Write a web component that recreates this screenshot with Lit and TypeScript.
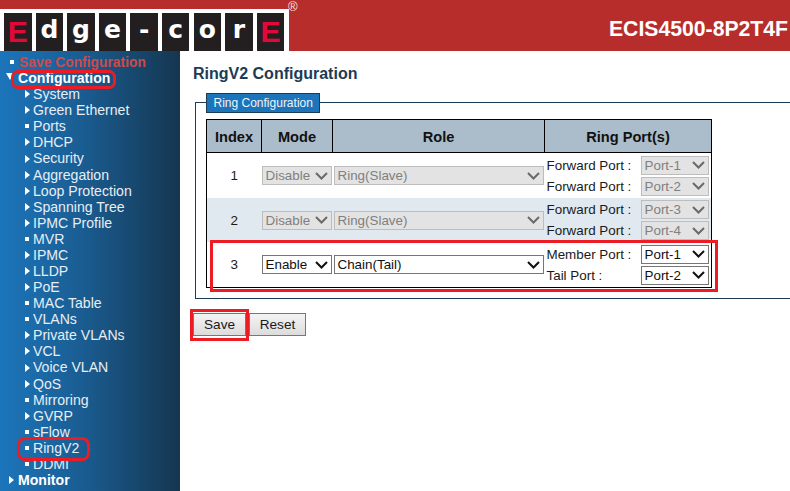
import { LitElement, html, css, svg } from "lit";
import { customElement } from "lit/decorators.js";

type Nav = { t: string; k: "bullet" | "arrow"; };
const NAV: Nav[] = [
  ["System", "arrow"], ["Green Ethernet", "arrow"], ["Ports", "bullet"], ["DHCP", "arrow"], ["Security", "arrow"],
  ["Aggregation", "arrow"], ["Loop Protection", "arrow"], ["Spanning Tree", "arrow"], ["IPMC Profile", "arrow"],
  ["MVR", "bullet"], ["IPMC", "arrow"], ["LLDP", "arrow"], ["PoE", "arrow"], ["MAC Table", "bullet"], ["VLANs", "bullet"],
  ["Private VLANs", "arrow"], ["VCL", "arrow"], ["Voice VLAN", "arrow"], ["QoS", "arrow"], ["Mirroring", "bullet"],
  ["GVRP", "arrow"], ["sFlow", "bullet"], ["RingV2", "bullet"], ["DDMI", "bullet"],
].map(([t, k]) => ({ t, k })) as Nav[];

const LOGO = ["E", "d", "g", "e", "-", "c", "o", "r", "E"];

const chevron = svg`<polyline points="1,1 6.5,6.5 12,1" fill="none" stroke="currentColor" stroke-width="2"/>`;

@customElement("app-root")
export class AppRoot extends LitElement {
  static styles = css`
    :host { display: block; width: 790px; height: 491px; overflow: hidden; position: relative; background: #fff;
      font-family: "Liberation Sans", Arial, sans-serif; }
    .header { height: 51px; background: #b72d2c; display: flex; justify-content: space-between; position: relative; }
    .logo { width: 289px; margin-top: 9px; background: #fff; box-sizing: border-box; padding: 4px 4px 0 4px; display: flex; gap: 4.1px; }
    .tile { width: 27.5px; height: 38px; background: #231f20; color: #fff; font: bold 25px/33px "DejaVu Sans", sans-serif;
      text-align: center; box-sizing: border-box; overflow: hidden; }
    .tile.red { color: #e4083a; font: bold 30px/37px "Liberation Sans", sans-serif; }
    .reg { position: absolute; left: 288px; top: 0; color: #f3e3e3; font-size: 13px; line-height: 13px; }
    .model { color: #fff; font-weight: bold; font-size: 21.2px; line-height: 22px; padding: 18px 2px 0 0; }
    .body { display: flex; height: 440px; }
    .side { width: 180px; flex: none; box-sizing: border-box; padding-top: 3px; overflow: hidden;
      background: linear-gradient(to right, #1c75bb, #1a5d92 45%, #153650); color: #e8eef4; font-size: 14.1px; }
    .row { height: 16.08px; line-height: 16.08px; display: flex; align-items: center; white-space: nowrap; padding-left: 25px; }
    .row .ic { width: 8px; flex: none; display: flex; align-items: center; }
    .bullet { width: 4px; height: 4px; background: #fff; display: block; }
    .arrow { width: 0; height: 0; border-left: 5px solid #fff; border-top: 4.5px solid transparent; border-bottom: 4.5px solid transparent; display: block; }
    .row.top { padding-left: 0; font-weight: bold; color: #fff; font-size: 14.1px; }
    .row.save { padding-left: 10px; color: #cd4a4c; font-size: 13.85px; }
    .save .ic { width: 9px; }
    .conf .ic { width: 18px; padding-left: 6px; box-sizing: border-box; }
    .down { width: 0; height: 0; border-top: 7px solid #fff; border-left: 4px solid transparent; border-right: 4px solid transparent; margin-top: -3px; }
    .row.mon { padding-left: 9px; }
    .mon .ic { width: 9px; }
    .main { flex: 1; min-width: 0; padding: 14px 0 0 12px; color: #1a3a52; }
    h1 { margin: 0 0 0 1px; font-size: 16px; line-height: 18px; font-weight: bold; color: #1c3b54; }
    .field { margin: 19px -60px 0 3px; border: 1px solid #1c3b54; height: 179px; padding: 16px 0 0 10px; box-sizing: content-box; position: relative; }
    .legend { position: absolute; left: 10px; top: -10px; height: 18px; line-height: 18px; padding: 0 6.5px; background: #1c75bb; border: 1px solid #1c3b54;
      color: #eef4f9; font-size: 12px; white-space: nowrap; }
    table { border-collapse: collapse; width: 505px; table-layout: fixed; border: 1px solid #000; font-size: 13.4px; color: #1a1a1a; }
    th { background: #abbcca; border: 1px solid #000; box-sizing: border-box; height: 33px; padding: 1px 0 0; font-size: 14.6px; font-weight: bold; color: #111; }
    td { padding: 0; height: 45px; }
    tr.alt td { height: 44px; background: #e0e8f0; }
    .idx { text-align: center; }
    .sel { box-sizing: border-box; height: 19px; border: 1px solid #767676; background: #fff; color: #111; font-size: 13.4px;
      line-height: 17px; padding-left: 3px; display: flex; justify-content: space-between; align-items: center; overflow: hidden; }
    .sel svg { width: 13px; height: 8px; flex: none; margin-right: 3px; color: #111; }
    .sel.off { background: #e3e3e3; border-color: #bdbdbd; color: #808080; }
    .sel.off svg { color: #6a6a6a; }
    .role { margin-left: 1px; }
    .ports { display: grid; grid-template-columns: 94px 68px; row-gap: 2px; padding: 0 0 0 2px; align-items: center; }
    .btns { display: flex; gap: 3px; margin: 14px 0 0 1px; }
    button { all: unset; box-sizing: border-box; height: 23px; border: 1px solid #777; text-align: center; font-size: 13.6px; color: #1a1a1a;
      background: linear-gradient(#f4f4f4, #dcdcdc); font-family: inherit; }
    .anno { position: absolute; border: 3px solid #ed1c24; box-sizing: border-box; pointer-events: none; }
    .a1 { left: 11px; top: 70px; width: 105px; height: 19px; border-radius: 7px; }
    .a2 { left: 17px; top: 437px; width: 73px; height: 24px; border-radius: 8px; }
    .a3 { left: 210px; top: 240px; width: 508px; height: 52px; }
    .a4 { left: 190px; top: 309px; width: 59px; height: 32px; }
  `;

  private sel(text: string, w: number, off: boolean, cls = "") {
    return html`<div class="sel ${off ? "off" : ""} ${cls}" style="width:${w}px">
      <span>${text}</span><svg viewBox="0 0 13 8">${chevron}</svg></div>`;
  }

  private rowT(i: number, mode: string, role: string, l1: string, p1: string, l2: string, p2: string, off: boolean, cls: string) {
    return html`<tr class=${cls}>
      <td class="idx">${i}</td>
      <td>${this.sel(mode, 70, off)}</td>
      <td>${this.sel(role, 210, off, "role")}</td>
      <td><div class="ports">
        <span>${l1}</span>${this.sel(p1, 68, off)}
        <span>${l2}</span>${this.sel(p2, 68, off)}
      </div></td>
    </tr>`;
  }

  render() {
    return html`
      <div class="header">
        <div class="logo">${LOGO.map((c, i) => html`<div class="tile ${i === 0 || i === 8 ? "red" : ""}">${c}</div>`)}</div>
        <span class="reg">®</span>
        <div class="model">ECIS4500-8P2T4F</div>
      </div>
      <div class="body">
        <nav class="side">
          <div class="row top save"><span class="ic"><i class="bullet"></i></span>Save Configuration</div>
          <div class="row top conf"><span class="ic"><i class="down"></i></span>Configuration</div>
          ${NAV.map((n) => html`<div class="row"><span class="ic"><i class=${n.k}></i></span>${n.t}</div>`)}
          <div class="row top mon"><span class="ic"><i class="arrow"></i></span>Monitor</div>
        </nav>
        <main class="main">
          <h1>RingV2 Configuration</h1>
          <div class="field">
            <div class="legend">Ring Configuration</div>
            <table>
              <colgroup><col style="width:55px"/><col style="width:71px"/><col style="width:212px"/><col style="width:167px"/></colgroup>
              <thead><tr><th>Index</th><th>Mode</th><th>Role</th><th>Ring Port(s)</th></tr></thead>
              <tbody>
                ${this.rowT(1, "Disable", "Ring(Slave)", "Forward Port :", "Port-1", "Forward Port :", "Port-2", true, "")}
                ${this.rowT(2, "Disable", "Ring(Slave)", "Forward Port :", "Port-3", "Forward Port :", "Port-4", true, "alt")}
                ${this.rowT(3, "Enable", "Chain(Tail)", "Member Port :", "Port-1", "Tail Port :", "Port-2", false, "")}
              </tbody>
            </table>
          </div>
          <div class="btns">
            <button style="width:53px">Save</button>
            <button style="width:57px">Reset</button>
          </div>
        </main>
      </div>
      <div class="anno a1"></div><div class="anno a2"></div><div class="anno a3"></div><div class="anno a4"></div>
    `;
  }
}
